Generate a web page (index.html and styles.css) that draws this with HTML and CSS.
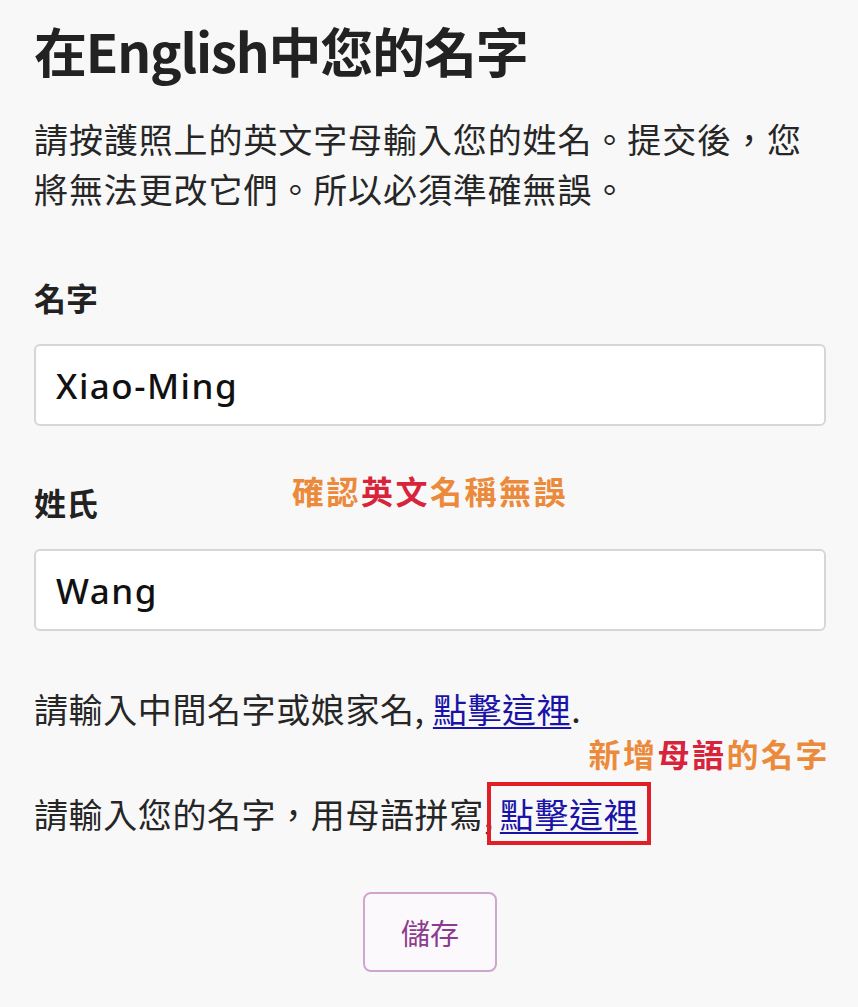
FILE: index.html
```html
<!DOCTYPE html>
<html lang="zh-Hant">
<head>
<meta charset="utf-8">
<link rel="stylesheet" href="styles.css">
</head>
<body>
<main class="page">
  <h1 class="title">在English中您的名字</h1>
  <p class="intro">請按護照上的英文字母輸入您的姓名。提交後，您將無法更改它們。所以必須準確無誤。</p>

  <div class="field">
    <label class="label" for="given">名字</label>
    <input class="input" id="given" type="text" value="Xiao-Ming">
  </div>

  <div class="field">
    <label class="label" for="family">姓氏</label>
    <input class="input" id="family" type="text" value="Wang">
    <div class="note note-one"><span class="o">確認</span><span class="r">英文</span><span class="o">名稱無誤</span></div>
  </div>

  <p class="line">請輸入中間名字或娘家名, <a href="#" class="link">點擊這裡</a>.</p>
  <p class="line line-two">請輸入您的名字，用母語拼寫,<a href="#" class="link boxed">點擊這裡</a>
    <span class="note note-two"><span class="o">新增</span><span class="r">母語</span><span class="o">的名字</span></span>
  </p>

  <div class="actions">
    <button class="save" type="button">儲存</button>
  </div>
</main>
</body>
</html>
```

FILE: styles.css
```css
html, body {
  margin: 0;
  padding: 0;
  background: #f8f8f8;
}

body {
  font-family: "Noto Sans CJK TC", "Noto Sans", sans-serif;
  color: #222222;
}

.page {
  width: 858px;
  box-sizing: border-box;
  padding: 14px 32px 20px 34px;
}

.title {
  margin: 0;
  font-size: 53px;
  line-height: 72px;
  font-weight: 700;
  letter-spacing: -1.2px;
  color: #222;
}

.intro {
  margin: 28px 0 0 0;
  font-size: 34px;
  line-height: 50px;
  font-weight: 400;
  letter-spacing: 0.9px;
  color: #262626;
}

.field {
  position: relative;
  margin-top: 61px;
}

.field + .field {
  margin-top: 54px;
}

.label {
  display: block;
  font-size: 32px;
  line-height: 44px;
  font-weight: 700;
  color: #222;
}

.input {
  display: block;
  box-sizing: border-box;
  width: 100%;
  height: 82px;
  margin-top: 25px;
  padding: 0 20px;
  border: 2px solid #d6d6d6;
  border-radius: 6px;
  background: #ffffff;
  font-family: "Noto Sans", "Noto Sans CJK TC", sans-serif;
  font-size: 35px;
  font-weight: 500;
  letter-spacing: 1.5px;
  color: #111;
  outline: none;
}

.note {
  position: absolute;
  font-size: 32px;
  font-weight: 700;
  line-height: 40px;
  letter-spacing: 2.5px;
  white-space: nowrap;
}

.note .o { color: #ec8a3c; }
.note .r { color: #d8243a; }

.note-one {
  top: -10px;
  left: 258px;
}

.line {
  margin: 55px 0 0 0;
  font-size: 34px;
  line-height: 46px;
  color: #262626;
  letter-spacing: 0.6px;
}

.line-two {
  position: relative;
  margin-top: 59px;
}

.note-two {
  top: -58px;
  right: -4px;
}

.link {
  color: #1a13a8;
  text-decoration: underline;
  text-decoration-thickness: 2px;
  text-underline-offset: 4px;
}

.boxed {
  outline: 4px solid #e01f26;
  outline-offset: 3px;
  padding: 0 6px;
}

.actions {
  display: flex;
  justify-content: center;
  margin-top: 55px;
}

.save {
  width: 134px;
  height: 80px;
  border: 2px solid #cfa6cf;
  border-radius: 8px;
  background: #fbf9fb;
  color: #8c3c8f;
  font-family: "Noto Sans CJK TC", sans-serif;
  font-size: 29px;
  cursor: pointer;
}
```
